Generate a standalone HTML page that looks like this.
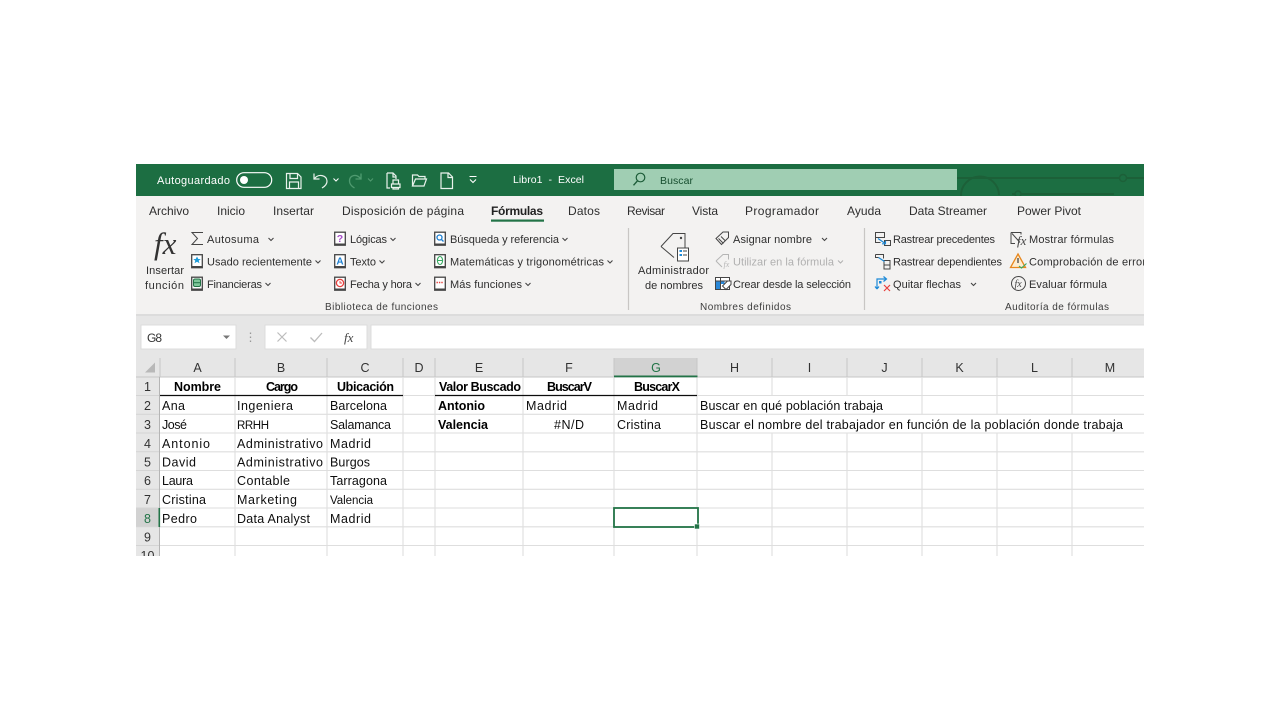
<!DOCTYPE html>
<html lang="es"><head><meta charset="utf-8"><title>Libro1 - Excel</title>
<style>
html,body{margin:0;padding:0;background:#fff;width:1280px;height:720px;overflow:hidden}
svg{display:block;position:absolute;left:0;top:0}
text{font-family:"Liberation Sans",sans-serif;white-space:pre}
.t{font-size:11px;fill:#fff}
.tab{font-size:12px;fill:#2e2e2e}
.r{font-size:11px;fill:#2e2e2e}
.g{font-size:10px;fill:#3c3c3c}
.c{font-size:12.5px;fill:#111}
.n{font-size:11.5px}
.b{font-size:12.5px;fill:#000;font-weight:bold}
.h{font-size:12.5px;fill:#333;text-anchor:middle}
.ch{fill:none;stroke:#444;stroke-width:1.1}
.bk{fill:#fff;stroke:#444;stroke-width:1.3}
.ic{fill:none;stroke:#444;stroke-width:1}
.w{fill:none;stroke:#e8f2ec;stroke-width:1.2}
.gr{stroke:#dedede;stroke-width:1.1}
</style></head><body>
<svg width="1280" height="720" viewBox="0 0 1280 720" xmlns="http://www.w3.org/2000/svg">
<defs>
<clipPath id="cp"><rect x="136" y="164" width="1008" height="392"/></clipPath>
<filter id="s" x="0" y="0" width="100%" height="100%"><feGaussianBlur stdDeviation="0.3"/></filter>
</defs>
<g clip-path="url(#cp)"><g filter="url(#s)">
<!-- title bar -->
<rect x="136" y="164" width="1008" height="32" fill="#1f6e43"/>
<path d="M957 178H1144" stroke="#1b6039" stroke-width="2"/>
<circle cx="1123" cy="178" r="3.500" fill="#1f6e43" stroke="#1b6039" stroke-width="1.500"/>
<path d="M961 196a19 19 0 0 1 38 -1" fill="none" stroke="#1b6039" stroke-width="2"/>
<path d="M1012 194H1114" stroke="#1b6039" stroke-width="2"/>
<circle cx="1018" cy="194" r="3" fill="#1f6e43" stroke="#1b6039" stroke-width="1.500"/>
<text class="t" x="157" y="184" textLength="73">Autoguardado</text>
<rect x="236.700" y="172.700" width="35" height="14.600" rx="7.300" fill="none" stroke="#fff" stroke-width="1.200"/>
<circle cx="244" cy="180" r="4" fill="#fff"/>
<!-- save -->
<path class="w" d="M286.500 173.500h11l3.500 3.500v11.500h-14.500zM290 173.500v5h7.500v-5M289.500 188.500v-6.500h9v6.500"/>
<!-- undo -->
<path class="w" d="M314 173.500v5.500h5.500M314.500 178.500c4-5 12-3.500 12.500 2.500c.2 3-2.500 5.500-5 7"/>
<path d="M333.500 178.500l2.500 2.500l2.500-2.500" fill="none" stroke="#fff"/>
<!-- redo -->
<path fill="none" stroke="#4f9b70" stroke-width="1.300" d="M361 173.500v5.500h-5.500M360.500 178.500c-4-5-11-3.500-11 2.500c0 3 2.500 5.500 5 7"/>
<path d="M368 178.500l2.500 2.500l2.500-2.500" fill="none" stroke="#4f9b70"/>
<!-- print preview -->
<path class="w" d="M387 173h6l3 3v3M387 173v15h3M393 173v4h3M391.500 184h8.500v3.500h-8.500zM393 184v-4h5.500v4M393 187.500v1.500h5.500v-1.500"/>
<!-- open -->
<path class="w" d="M412.500 186v-11h5l1.500 1.500h6v2.500M412.500 186l3-7h11l-2.500 7z"/>
<!-- new -->
<path class="w" d="M441 173h7.500l4 4v11.500h-11.500zM448 173v4.500h4.500"/>
<!-- customize -->
<path d="M469.500 176.500h7M470 179.500l3 3l3-3" fill="none" stroke="#fff" stroke-width="1.100"/>
<text class="t" x="513" y="183" textLength="71" style="font-size:10.500px">Libro1  -  Excel</text>
<!-- search -->
<rect x="614" y="169" width="343" height="21" fill="#a0ceb3"/>
<circle cx="640.500" cy="177.500" r="4.300" fill="none" stroke="#1d5c38" stroke-width="1.200"/>
<path d="M637.500 180.800l-4 4.500" stroke="#1d5c38" stroke-width="1.400"/>
<text x="660" y="184" textLength="33" style="font-size:10.500px;fill:#174d2e">Buscar</text>

<!-- ribbon -->
<rect x="136" y="196" width="1008" height="119" fill="#f3f2f1"/>
<rect x="136" y="315" width="1008" height="241" fill="#e6e6e6"/>
<rect x="136" y="314" width="1008" height="2" fill="#dcdcdc"/>
<text class="tab" x="149" y="215" textLength="40">Archivo</text>
<text class="tab" x="217" y="215" textLength="28">Inicio</text>
<text class="tab" x="273" y="215" textLength="41">Insertar</text>
<text class="tab" x="342" y="215" textLength="122">Disposición de página</text>
<text class="tab" x="491" y="215" textLength="52" style="font-weight:bold;fill:#222">Fórmulas</text>
<rect x="491" y="219.500" width="53" height="2.200" fill="#217346"/>
<text class="tab" x="568" y="215" textLength="32">Datos</text>
<text class="tab" x="627" y="215" textLength="38">Revisar</text>
<text class="tab" x="692" y="215" textLength="26">Vista</text>
<text class="tab" x="745" y="215" textLength="74">Programador</text>
<text class="tab" x="847" y="215" textLength="34">Ayuda</text>
<text class="tab" x="909" y="215" textLength="78">Data Streamer</text>
<text class="tab" x="1017" y="215" textLength="64">Power Pivot</text>

<!-- function library -->
<text x="154" y="254" style="font-family:'Liberation Serif',serif;font-style:italic;font-size:31px;fill:#333">fx</text>
<text class="r" x="146" y="274" textLength="38">Insertar</text>
<text class="r" x="145" y="289" textLength="39">función</text>
<path d="M203 232.500h-11l5.500 6l-5.500 6h11" fill="none" stroke="#444" stroke-width="1"/>
<text class="r" x="207" y="243" textLength="52">Autosuma</text>
<path class="ch" d="M268.500 238l2.500 2.500l2.500-2.500"/>
<rect class="bk" x="191.700" y="254.700" width="10.600" height="13"/><path d="M192 266h10v2h-10z" fill="#444"/>
<path d="M197 256.500l1.300 2.500h2.400l-2 1.700l.8 2.600l-2.500-1.500l-2.500 1.500l.8-2.600l-2-1.700h2.400z" fill="#1f9bd8"/>
<text class="r" x="207" y="265.500" textLength="105">Usado recientemente</text>
<path class="ch" d="M315.500 260.500l2.500 2.500l2.500-2.500"/>
<rect class="bk" x="191.700" y="277.200" width="10.600" height="13"/><path d="M192 288.500h10v2h-10z" fill="#444"/>
<rect x="193.500" y="279" width="7" height="7.500" rx="1.500" fill="#7fc79a" stroke="#217346"/>
<path d="M193.500 282.700h7" stroke="#217346"/>
<text class="r" x="207" y="288" textLength="55">Financieras</text>
<path class="ch" d="M265.500 283l2.500 2.500l2.500-2.500"/>

<rect class="bk" x="334.700" y="232.200" width="10.600" height="13"/><path d="M335 243.500h10v2h-10z" fill="#444"/>
<text x="340" y="242" text-anchor="middle" style="font-size:10.500px;font-weight:bold;fill:#a64dc8">?</text>
<text class="r" x="350" y="243" textLength="37">Lógicas</text>
<path class="ch" d="M390.500 238l2.500 2.500l2.500-2.500"/>
<rect class="bk" x="334.700" y="254.700" width="10.600" height="13"/><path d="M335 266h10v2h-10z" fill="#444"/>
<text x="340" y="264.500" text-anchor="middle" style="font-size:10px;font-weight:bold;fill:#1f7fd0">A</text>
<text class="r" x="350" y="265.500" textLength="26">Texto</text>
<path class="ch" d="M379.500 260.500l2.500 2.500l2.500-2.500"/>
<rect class="bk" x="334.700" y="277.200" width="10.600" height="13"/><path d="M335 288.500h10v2h-10z" fill="#444"/>
<circle cx="340" cy="283" r="3.600" fill="#fff" stroke="#e8413d" stroke-width="1.300"/><path d="M340 281v2h2" stroke="#e8413d" fill="none" stroke-width=".9"/>
<text class="r" x="350" y="288" textLength="62">Fecha y hora</text>
<path class="ch" d="M415.500 283l2.500 2.500l2.500-2.500"/>

<rect class="bk" x="434.700" y="232.200" width="10.600" height="13"/><path d="M435 243.500h10v2h-10z" fill="#444"/>
<circle cx="439.500" cy="237.500" r="2.500" fill="#fff" stroke="#1f7fd0" stroke-width="1.300"/><path d="M441.500 239.500l2 2" stroke="#1f7fd0" stroke-width="1.300"/>
<text class="r" x="450" y="243" textLength="109">Búsqueda y referencia</text>
<path class="ch" d="M562.500 238l2.500 2.500l2.500-2.500"/>
<rect class="bk" x="434.700" y="254.700" width="10.600" height="13"/><path d="M435 266h10v2h-10z" fill="#444"/>
<ellipse cx="440" cy="260.500" rx="2.600" ry="4" fill="#fff" stroke="#36a860" stroke-width="1.100"/><path d="M437.500 260.500h5" stroke="#36a860"/>
<text class="r" x="450" y="265.500" textLength="154">Matemáticas y trigonométricas</text>
<path class="ch" d="M607.500 260.500l2.500 2.500l2.500-2.500"/>
<rect class="bk" x="434.700" y="277.200" width="10.600" height="13"/><path d="M435 288.500h10v2h-10z" fill="#444"/>
<path d="M436.500 282.500h7" stroke="#e8413d" stroke-width="1.500" stroke-dasharray="1.400 1"/>
<text class="r" x="450" y="288" textLength="72">Más funciones</text>
<path class="ch" d="M525.500 283l2.500 2.500l2.500-2.500"/>
<text class="g" x="325" y="310" textLength="113">Biblioteca de funciones</text>
<path d="M628.500 228V310M864.500 228V310" stroke="#c8c6c4" stroke-width="1.200"/>

<!-- names -->
<path d="M661 246.500l12-13h12v14M661 246.500l13 11" fill="none" stroke="#444" stroke-width="1"/>
<circle cx="681" cy="238" r="1.200" fill="#444"/>
<rect x="677.500" y="248" width="11" height="13" fill="#fff" stroke="#444"/>
<path d="M679.500 251h2.500M679.500 255h2.500" stroke="#1f8ad8" stroke-width="2"/>
<path d="M683 251h4M683 255h4" stroke="#444"/>
<text class="r" x="638" y="274" textLength="71">Administrador</text>
<text class="r" x="645" y="289" textLength="58">de nombres</text>
<path class="ic" d="M716 238.500l7-6.500h5.500v5.500l-7 7zM718.500 238.500l5 5M721 236.500l4.500 4.500"/>
<text class="r" x="733" y="243" textLength="79">Asignar nombre</text>
<path class="ch" d="M822 238l2.500 2.500l2.500-2.500"/>
<path d="M716 261l7-6.500h5.500v5M716 261l6 6" fill="none" stroke="#b5b5b5"/>
<text x="723.500" y="267" style="font-family:'Liberation Serif',serif;font-style:italic;font-size:8px;fill:#b5b5b5">fx</text>
<text class="r" x="733" y="265.500" textLength="101" style="fill:#b0b0b0">Utilizar en la fórmula</text>
<path d="M838 260.500l2.500 2.500l2.500-2.500" fill="none" stroke="#b0b0b0"/>
<rect x="715.500" y="277.500" width="14" height="12" fill="#fff" stroke="#444"/>
<rect x="716" y="281" width="4.500" height="8" fill="#2b88d8"/><rect x="720.500" y="281" width="4" height="3" fill="#2b88d8"/>
<path class="ic" d="M720.500 277.500v12M715.500 281h14"/>
<path d="M722.500 286l5-5h3.500v3.500l-5 5z" fill="#fff" stroke="#444"/>
<text class="r" x="733" y="288" textLength="118">Crear desde la selección</text>
<text class="g" x="700" y="310" textLength="91">Nombres definidos</text>

<!-- audit -->
<path class="ic" d="M875.500 232.500h9v5h-9zM875.500 237.500v5h5M884.500 240.500h6v5h-6z"/>
<path d="M878 238.500l6.500 4.500" stroke="#1f8ad8" stroke-width="1.200"/><path d="M882 243.800h3.500v-3" fill="none" stroke="#1f8ad8" stroke-width="1.100"/>
<text class="r" x="893" y="243" textLength="102">Rastrear precedentes</text>
<path class="ic" d="M875.500 254.500h8v4M875.500 254.500v3h3M884 260.500h6v4.500h-6zM884 265h6v4h-6z"/>
<path d="M878.500 257.500l6 4" stroke="#1f8ad8" stroke-width="1.200"/>
<text class="r" x="893" y="265.500" textLength="109">Rastrear dependientes</text>
<path d="M877 289v-10h9M883.500 276.500l3 2.500l-3 2.500M877 289l-2-2.500M877 289l2-2.500" fill="none" stroke="#1f8ad8" stroke-width="1.200"/>
<rect x="879" y="281" width="2.500" height="2.500" fill="#1f8ad8"/>
<path d="M884 285l6 6M890 285l-6 6" stroke="#e8413d" stroke-width="1.200"/>
<text class="r" x="893" y="288" textLength="68">Quitar flechas</text>
<path class="ch" d="M971 283l2.500 2.500l2.500-2.500"/>
<path class="ic" d="M1011 232.500h10v2M1011 232.500v11h4M1012 233.500l8 9"/>
<text x="1017" y="245" style="font-family:'Liberation Serif',serif;font-style:italic;font-size:13px;fill:#444">fx</text>
<text class="r" x="1029" y="243" textLength="85">Mostrar fórmulas</text>
<path d="M1018 254l7.500 13.500h-15z" fill="#fdecd0" stroke="#e8871e" stroke-width="1.300"/>
<path d="M1018 258v5" stroke="#444" stroke-width="1.300"/>
<path d="M1019 266l2.500 2l5-4.500" fill="none" stroke="#36a860" stroke-width="1.100"/>
<text class="r" x="1029" y="265.500" textLength="129">Comprobación de errores</text>
<circle cx="1018.500" cy="283.500" r="7" fill="none" stroke="#444"/>
<text x="1014.500" y="287" style="font-family:'Liberation Serif',serif;font-style:italic;font-size:10px;fill:#444">fx</text>
<text class="r" x="1029" y="288" textLength="78">Evaluar fórmula</text>
<text class="g" x="1005" y="310" textLength="104">Auditoría de fórmulas</text>

<!-- formula bar -->
<rect x="141" y="325" width="95" height="24" fill="#fff" stroke="#dcdcdc"/>
<text x="147" y="342" textLength="15" style="font-size:12px;fill:#333">G8</text>
<path d="M223 335.500h7l-3.500 3.500z" fill="#777"/>
<path d="M250.500 332.500v1.500M250.500 336.500v1.500M250.500 340.500v1.500" stroke="#999" stroke-width="1.300"/>
<rect x="265" y="325" width="102" height="24" fill="#fff" stroke="#dcdcdc"/>
<path d="M277.500 332.500l9 9M286.500 332.500l-9 9" stroke="#bcbcbc" stroke-width="1.200"/>
<path d="M310.500 337.500l4 4l7.500-8.500" fill="none" stroke="#bcbcbc" stroke-width="1.300"/>
<text x="344" y="342" style="font-family:'Liberation Serif',serif;font-style:italic;font-size:13px;fill:#444">fx</text>
<rect x="371" y="325" width="780" height="24" fill="#fff" stroke="#dcdcdc"/>

<!-- sheet -->
<rect x="160" y="377" width="990" height="180" fill="#fff"/>
<rect x="136" y="358" width="1008" height="19" fill="#e6e6e6"/>
<rect x="136" y="377" width="24" height="180" fill="#e6e6e6"/>
<path d="M155 372.500v-10l-10 10z" fill="#b8b8b8"/>
<rect x="614" y="358" width="83.500" height="19" fill="#d2d2d2"/>
<rect x="136" y="508" width="24" height="19" fill="#d2d2d2"/>
<!-- header separators -->
<path d="M160 358V377M235 358V377M327 358V377M403 358V377M435 358V377M523 358V377M614 358V377M697 358V377M772 358V377M847 358V377M922 358V377M997 358V377M1072 358V377" stroke="#c6c6c6" stroke-width="1"/>
<path d="M136 377H1144" stroke="#c6c6c6" stroke-width="1"/>
<path d="M136 395.500H160M136 414.300H160M136 433H160M136 451.800H160M136 470.500H160M136 489.300H160M136 508H160M136 526.800H160M136 545.500H160" stroke="#d4d4d4" stroke-width="1"/>
<path d="M159.500 377V556" stroke="#b5b5b5" stroke-width="1"/>
<!-- grid -->
<path class="gr" d="M160 395.500H1144M160 414.300H1144M160 433H1144M160 451.800H1144M160 470.500H1144M160 489.300H1144M160 508H1144M160 526.800H1144M160 545.500H1144"/>
<path class="gr" d="M235 377V556M327 377V556M403 377V556M435 377V556M523 377V556M614 377V556M697 377V556"/>
<path class="gr" d="M772 377V396M772 433V556M847 377V396M847 433V556M922 377V414M922 433V556M997 377V414M997 433V556M1072 377V414M1072 433V556"/>
<path d="M160 395.500H403M435 395.500H697" stroke="#111" stroke-width="1.300"/>
<!-- green highlights -->
<rect x="614" y="375.500" width="83.500" height="1.800" fill="#217346"/>
<rect x="158.500" y="508" width="1.600" height="19" fill="#217346"/>
<!-- headers -->
<text class="h" x="197.500" y="372">A</text><text class="h" x="281" y="372">B</text><text class="h" x="365" y="372">C</text><text class="h" x="419" y="372">D</text><text class="h" x="479" y="372">E</text><text class="h" x="569" y="372">F</text><text class="h" x="656" y="372" style="fill:#217346">G</text><text class="h" x="734.500" y="372">H</text><text class="h" x="809.500" y="372">I</text><text class="h" x="884.500" y="372">J</text><text class="h" x="959.500" y="372">K</text><text class="h" x="1034.500" y="372">L</text><text class="h" x="1110" y="372">M</text>
<text class="h" x="147.500" y="391">1</text><text class="h" x="147.500" y="410">2</text><text class="h" x="147.500" y="429">3</text><text class="h" x="147.500" y="448">4</text><text class="h" x="147.500" y="466.500">5</text><text class="h" x="147.500" y="485">6</text><text class="h" x="147.500" y="504">7</text><text class="h" x="147.500" y="523" style="fill:#217346">8</text><text class="h" x="147.500" y="541.500">9</text><text class="h" x="147.500" y="560">10</text>
<!-- cells -->
<text class="b" x="174" y="391" textLength="47">Nombre</text>
<text class="b n" x="266" y="391" textLength="32">Cargo</text>
<text class="b" x="337" y="391" textLength="57">Ubicación</text>
<text class="b" x="439" y="391" textLength="82">Valor Buscado</text>
<text class="b n" x="547" y="391" textLength="45">BuscarV</text>
<text class="b n" x="634" y="391" textLength="46">BuscarX</text>

<text class="c" x="162" y="410" textLength="23">Ana</text>
<text class="c" x="237" y="410" textLength="56">Ingeniera</text>
<text class="c" x="330" y="410" textLength="57">Barcelona</text>
<text class="b" x="438" y="410" textLength="47">Antonio</text>
<text class="c" x="526" y="410" textLength="41">Madrid</text>
<text class="c" x="617" y="410" textLength="41">Madrid</text>
<text class="c" x="700" y="410" textLength="183">Buscar en qué población trabaja</text>

<text class="c" x="162" y="429" textLength="25">José</text>
<text class="c n" x="237" y="429" textLength="32">RRHH</text>
<text class="c" x="330" y="429" textLength="61">Salamanca</text>
<text class="b" x="438" y="429" textLength="50">Valencia</text>
<text class="c" x="554" y="429" textLength="30">#N/D</text>
<text class="c" x="617" y="429" textLength="44">Cristina</text>
<text class="c" x="700" y="429" textLength="423">Buscar el nombre del trabajador en función de la población donde trabaja</text>

<text class="c" x="162" y="448" textLength="48">Antonio</text>
<text class="c" x="237" y="448" textLength="86">Administrativo</text>
<text class="c" x="330" y="448" textLength="41">Madrid</text>

<text class="c" x="162" y="466.500" textLength="34">David</text>
<text class="c" x="237" y="466.500" textLength="86">Administrativo</text>
<text class="c" x="330" y="466.500" textLength="40">Burgos</text>

<text class="c" x="162" y="485" textLength="31">Laura</text>
<text class="c" x="237" y="485" textLength="53">Contable</text>
<text class="c" x="330" y="485" textLength="57">Tarragona</text>

<text class="c" x="162" y="504" textLength="44">Cristina</text>
<text class="c" x="237" y="504" textLength="60">Marketing</text>
<text class="c n" x="330" y="504" textLength="43">Valencia</text>

<text class="c" x="162" y="523" textLength="35">Pedro</text>
<text class="c" x="237" y="523" textLength="73">Data Analyst</text>
<text class="c" x="330" y="523" textLength="41">Madrid</text>
<!-- selection -->
<rect x="614" y="508" width="84" height="19" fill="#fff" stroke="#217346" stroke-width="1.800"/>
<rect x="694.500" y="524" width="5" height="5" fill="#217346" stroke="#fff" stroke-width=".6"/>
</g></g>
</svg>
</body></html>
